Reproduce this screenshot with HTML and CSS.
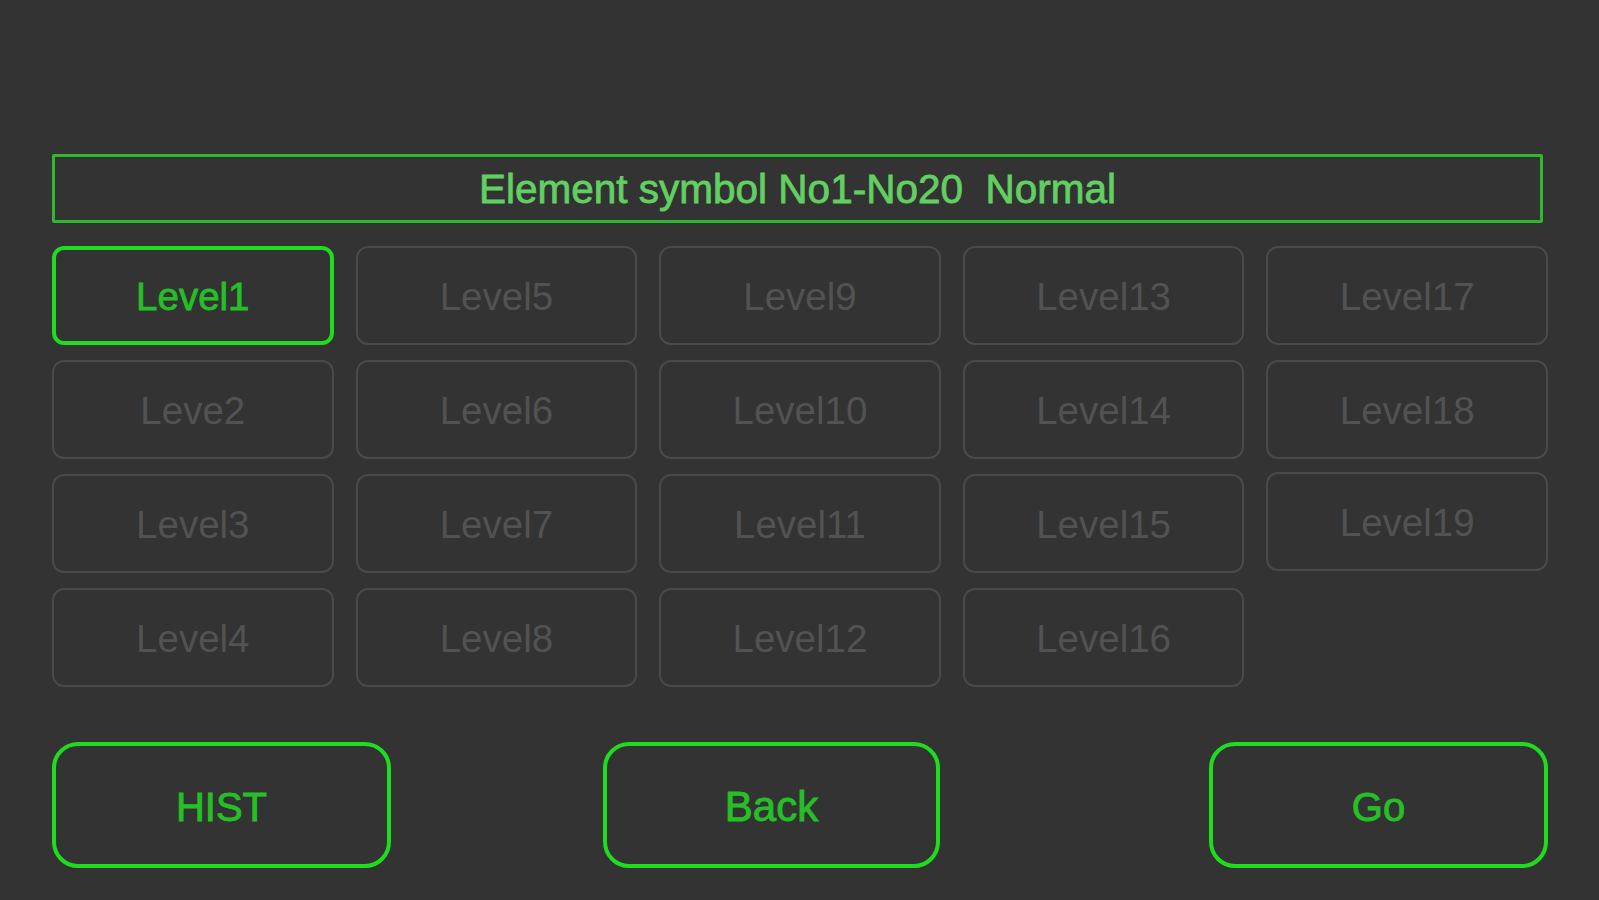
FILE: index.html
```html
<!DOCTYPE html>
<html>
<head>
<meta charset="utf-8">
<link rel="stylesheet" href="styles.css">
</head>
<body>
<div class="screen">
  <div class="title">Element symbol No1-No20&nbsp;&nbsp;Normal</div>
  <div class="grid">
    <div class="lvl active">Level1</div>
    <div class="lvl">Level5</div>
    <div class="lvl">Level9</div>
    <div class="lvl">Level13</div>
    <div class="lvl">Level17</div>
    <div class="lvl">Leve2</div>
    <div class="lvl">Level6</div>
    <div class="lvl">Level10</div>
    <div class="lvl">Level14</div>
    <div class="lvl">Level18</div>
    <div class="lvl">Level3</div>
    <div class="lvl">Level7</div>
    <div class="lvl">Level11</div>
    <div class="lvl">Level15</div>
    <div class="lvl raised">Level19</div>
    <div class="lvl">Level4</div>
    <div class="lvl">Level8</div>
    <div class="lvl">Level12</div>
    <div class="lvl">Level16</div>
  </div>
  <div class="actions">
    <div class="act">HIST</div>
    <div class="act back">Back</div>
    <div class="act go">Go</div>
  </div>
</div>
</body>
</html>
```

FILE: styles.css
```css
html, body {
  margin: 0;
  padding: 0;
  background: #333333;
}
body {
  font-family: "Liberation Sans", Arial, sans-serif;
  width: 1599px;
  height: 900px;
  overflow: hidden;
}
.screen {
  padding: 154px 51px 0 52px;
  display: flex;
  flex-direction: column;
}
.title {
  box-sizing: border-box;
  width: 1491px;
  height: 69px;
  border: 3px solid #2cba2c;
  border-radius: 2px;
  color: #62cf62;
  font-size: 40.5px;
  -webkit-text-stroke: 0.8px #62cf62;
  display: flex;
  align-items: center;
  justify-content: center;
  padding-top: 1px;
}
.grid {
  margin-top: 23px;
  display: grid;
  grid-template-columns: repeat(5, 1fr);
  grid-auto-rows: 99px;
  column-gap: 22px;
  row-gap: 15px;
}
.lvl {
  box-sizing: border-box;
  border: 2px solid #4a4a4a;
  border-radius: 12px;
  color: #525252;
  font-size: 38.5px;
  display: flex;
  align-items: center;
  justify-content: center;
  padding-top: 2px;
}
.lvl.raised {
  position: relative;
  top: -2px;
}
.lvl.active {
  border: 4px solid #1fdc1f;
  color: #25c025;
  -webkit-text-stroke: 0.8px #25c025;
}
.actions {
  margin-top: 55px;
  display: flex;
}
.act {
  box-sizing: border-box;
  width: 339px;
  height: 126px;
  border: 4px solid #1fdc1f;
  border-radius: 26px;
  color: #25c025;
  font-size: 40px;
  -webkit-text-stroke: 0.9px #25c025;
  display: flex;
  align-items: center;
  justify-content: center;
  padding-top: 4px;
}
.act.back {
  width: 337px;
  margin-left: 212px;
  font-size: 42px;
}
.act.go {
  margin-left: auto;
}
```
